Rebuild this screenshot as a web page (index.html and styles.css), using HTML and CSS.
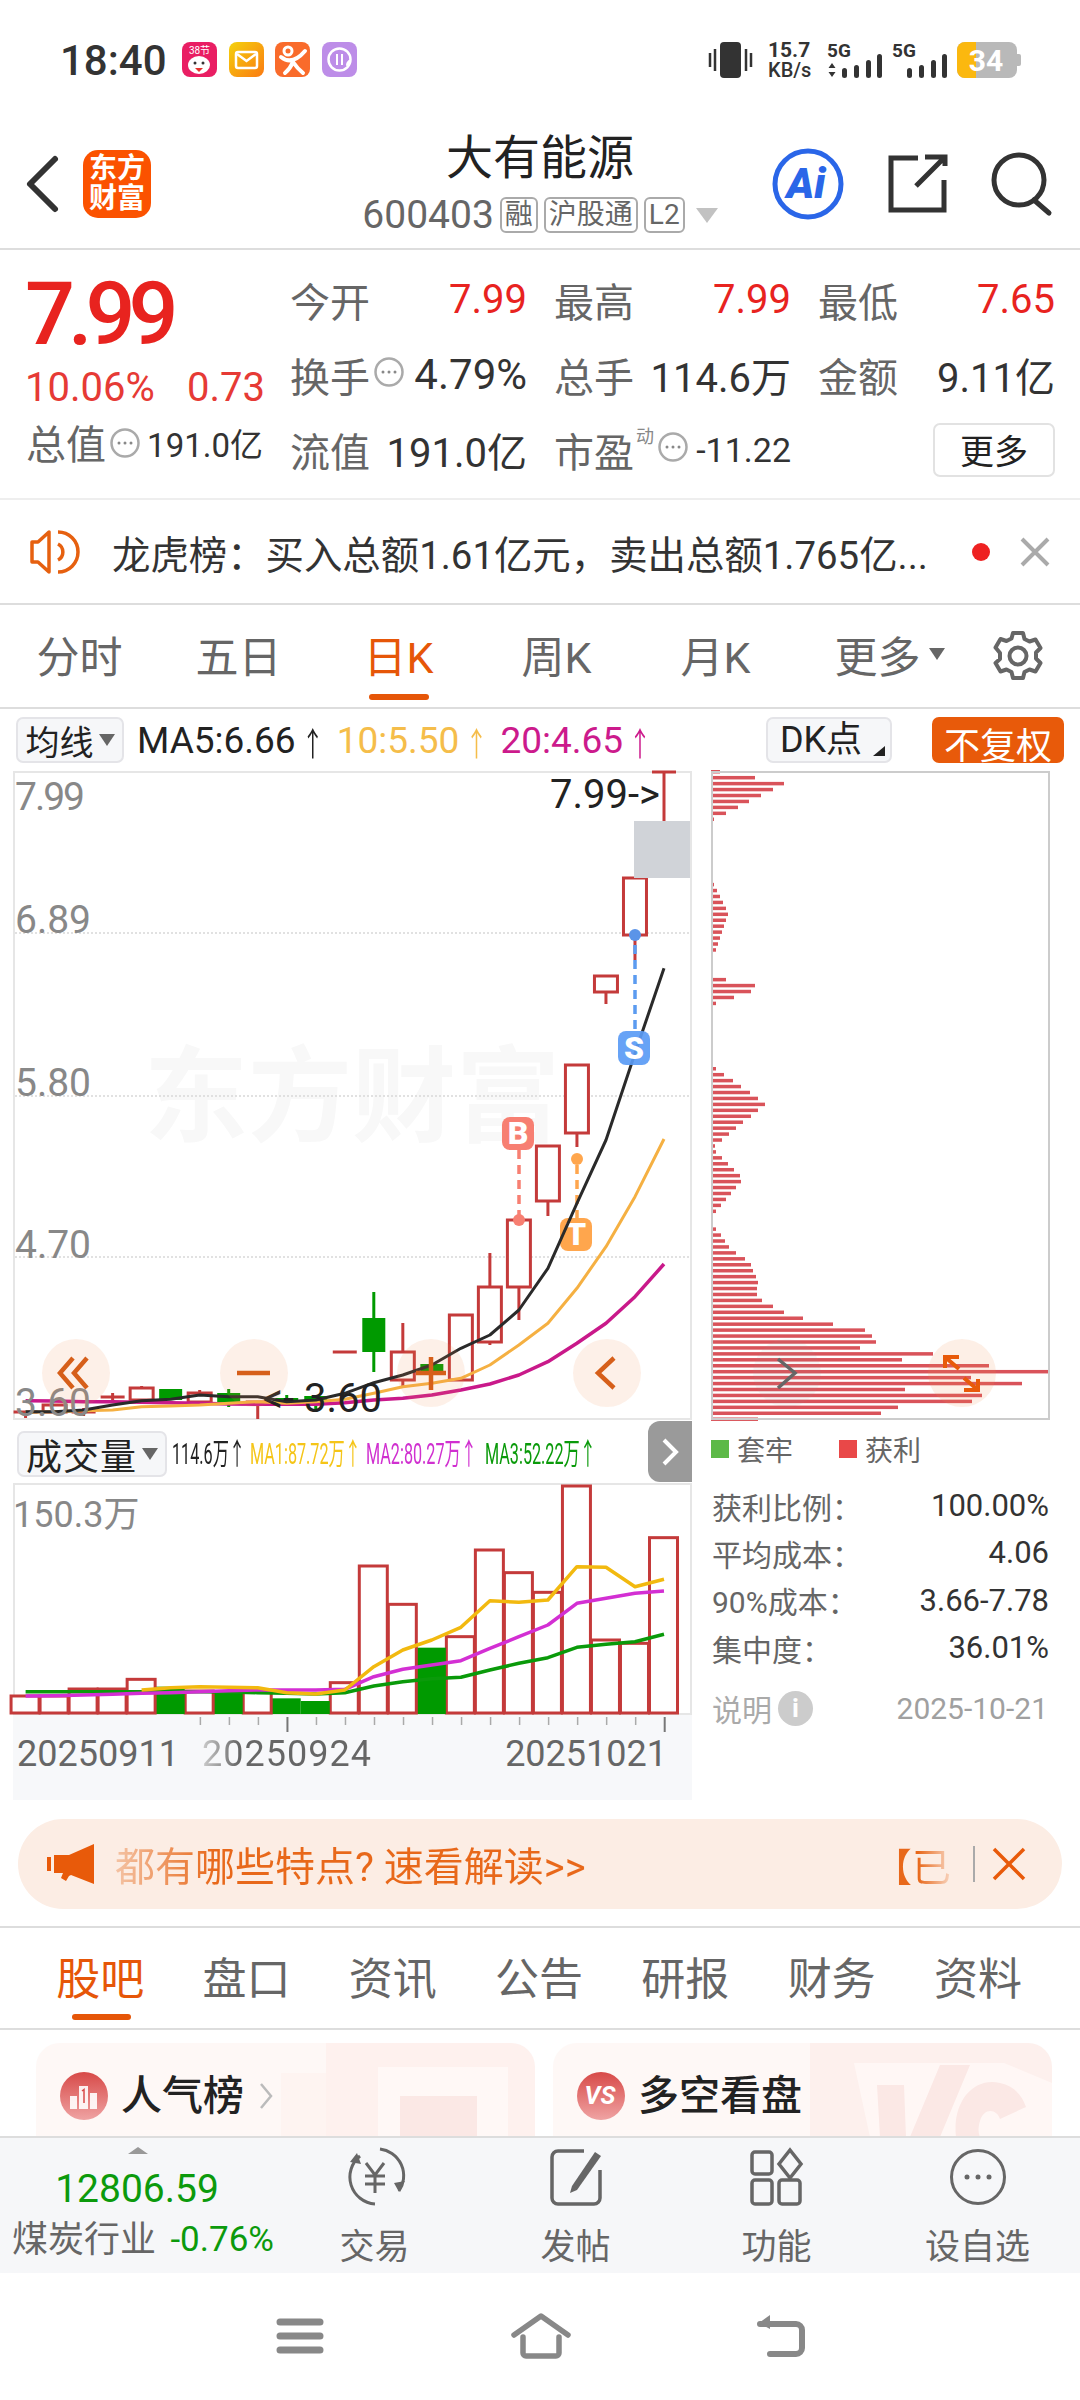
FILE: index.html
```html
<!DOCTYPE html>
<html lang="zh-CN">
<head>
    <meta charset="UTF-8">
    <meta name="viewport" content="width=device-width, initial-scale=1.0">
    <title>大有能源</title>
    <link rel="stylesheet" href="styles.css">
</head>
<body>
    <svg class="defs" width="0" height="0">
        <symbol id="dots" viewBox="0 0 30 30">
            <circle cx="15" cy="15" r="13.5" fill="none" stroke="#aaa" stroke-width="2.5"/>
            <circle cx="9" cy="15" r="1.5" fill="#888"/><circle cx="15" cy="15" r="1.5" fill="#888"/><circle cx="21" cy="15" r="1.5" fill="#888"/>
        </symbol>
    </svg>

    <div class="status">
        <span class="time">18:40</span>
        <svg class="apps" width="175" height="36" viewBox="182 42 175 36">
            <defs>
                <linearGradient id="gMail" x1="0" y1="0" x2="1" y2="1"><stop offset="0" stop-color="#f4d20c"/><stop offset="1" stop-color="#fb7a12"/></linearGradient>
            </defs>
            <rect x="182" y="42" width="35" height="35" rx="8" fill="#e91e63"/>
            <text x="199.500" y="54" class="app-txt">38节</text>
            <ellipse cx="199" cy="65" rx="11" ry="9" fill="#fff"/>
            <circle cx="195" cy="63" r="1.500" fill="#333"/><circle cx="203" cy="63" r="1.500" fill="#333"/>
            <path d="M195 68h8l-4 4z" fill="#e5322d"/>
            <rect x="229" y="42" width="35" height="35" rx="8" fill="url(#gMail)"/>
            <rect x="236" y="52" width="21" height="16" rx="2" fill="none" stroke="#fff" stroke-width="2.500"/>
            <path d="M237 54l9.500 7 9.500-7" fill="none" stroke="#fff" stroke-width="2.500"/>
            <rect x="275" y="42" width="35" height="35" rx="8" fill="#f96b2b"/>
            <circle cx="288" cy="51" r="4" fill="none" stroke="#fff" stroke-width="3"/>
            <path d="M281 57q11 9 24-6M293 62q-3 7-8 11M293 62q4 6 10 11" fill="none" stroke="#fff" stroke-width="4" stroke-linecap="round"/>
            <rect x="322" y="42" width="35" height="35" rx="8" fill="#bd8de8"/>
            <circle cx="339.500" cy="59.500" r="11" fill="none" stroke="#fff" stroke-width="2.500"/>
            <path d="M337 54v11M342 54v11" stroke="#fff" stroke-width="2"/>
            <path d="M346 66c3-1 5-3 5-7-3 1-5 3-5 7z" fill="#fff"/>
        </svg>
        <svg class="sys" width="325" height="40" viewBox="700 40 325 40">
            <rect x="720" y="42" width="21" height="36" rx="4" fill="#333"/>
            <path d="M710 53v14M715 49v22M746 49v22M751 53v14" stroke="#333" stroke-width="2.500"/>
            <text x="768" y="57" class="sys-txt">15.7</text>
            <text x="768" y="77" class="sys-sm">KB/s</text>
            <text x="827" y="57" class="sys-5g">5G</text>
            <path d="M832 63l3.500 5h-7zM832 77l3.500-5h-7z" fill="#333"/>
            <g fill="#333">
                <rect x="842" y="68" width="5" height="10" rx="2.500"/><rect x="854" y="65" width="5" height="13" rx="2.500"/><rect x="866" y="60" width="5" height="18" rx="2.500"/><rect x="877" y="54" width="5" height="24" rx="2.500"/>
                <rect x="907" y="68" width="5" height="10" rx="2.500"/><rect x="919" y="65" width="5" height="13" rx="2.500"/><rect x="931" y="60" width="5" height="18" rx="2.500"/><rect x="942" y="54" width="5" height="24" rx="2.500"/>
            </g>
            <text x="892" y="57" class="sys-5g">5G</text>
            <rect x="957" y="42" width="60" height="36" rx="8" fill="#b9b9b9"/>
            <path d="M965 42h11v36h-11a8 8 0 0 1-8-8v-20a8 8 0 0 1 8-8z" fill="#fbb80f"/>
            <path d="M1017 54h2a2 2 0 0 1 2 2v8a2 2 0 0 1-2 2h-2z" fill="#b9b9b9"/>
            <text x="986" y="71" class="bat-txt">34</text>
        </svg>
    </div>

    <header class="nav">
        <div class="nav-left">
            <svg width="34" height="56" viewBox="0 0 34 56"><path d="M30 3L5 28l25 25" fill="none" stroke="#333" stroke-width="6" stroke-linecap="round" stroke-linejoin="round"/></svg>
            <div class="logo"><span>东方</span><span>财富</span></div>
        </div>
        <div class="nav-mid">
            <div class="stock-name">大有能源</div>
            <div class="stock-sub">
                <span class="code">600403</span>
                <span class="tag">融</span><span class="tag">沪股通</span><span class="tag">L2</span>
                <i class="tri"></i>
            </div>
        </div>
        <div class="nav-right">
            <svg width="72" height="72" viewBox="0 0 72 72">
                <circle cx="36" cy="36" r="33" fill="none" stroke="#2a66e8" stroke-width="5"/>
                <text x="34" y="50" class="ai-txt">Ai</text>
            </svg>
            <svg width="60" height="60" viewBox="886 152 60 60"><path d="M917 156h-27v52h53v-30M915 184l27-27M924 155h20v9" fill="none" stroke="#333" stroke-width="5"/></svg>
            <svg width="62" height="62" viewBox="990 150 62 62"><circle cx="1019" cy="177" r="25" fill="none" stroke="#333" stroke-width="5"/><path d="M1034 197l15 13" stroke="#333" stroke-width="5" stroke-linecap="round"/></svg>
        </div>
    </header>

    <section class="quote">
        <div class="quote-left">
            <div class="price">7.99</div>
            <div class="change"><span>10.06%</span><span>0.73</span></div>
            <div class="total">
                <span class="lab">总值<svg class="dot"><use href="#dots"/></svg></span>
                <span class="val-sm">191.0亿</span>
            </div>
        </div>
        <div class="quote-grid">
            <div class="cell"><span class="lab">今开</span><span class="up">7.99</span></div>
            <div class="cell"><span class="lab">最高</span><span class="up">7.99</span></div>
            <div class="cell"><span class="lab">最低</span><span class="up">7.65</span></div>
            <div class="cell"><span class="lab">换手<svg class="dot"><use href="#dots"/></svg></span><span class="val val-wide">4.79%</span></div>
            <div class="cell"><span class="lab">总手</span><span class="val">114.6万</span></div>
            <div class="cell"><span class="lab">金额</span><span class="val">9.11亿</span></div>
            <div class="cell"><span class="lab">流值</span><span class="val">191.0亿</span></div>
            <div class="cell"><span class="lab">市盈<sup class="dyn">动</sup><svg class="dot"><use href="#dots"/></svg></span><span class="val-md">-11.22</span></div>
            <div class="cell cell-end"><button class="more-btn">更多</button></div>
        </div>
    </section>

    <section class="notice">
        <svg width="52" height="44" viewBox="0 0 52 44">
            <path d="M19 2v40L8 32H2V12h6z" fill="none" stroke="#e6600f" stroke-width="3.500" stroke-linejoin="round"/>
            <path d="M28 14a9 9 0 0 1 0 16M28 2a20 20 0 0 1 0 40" fill="none" stroke="#e6600f" stroke-width="3.500"/>
        </svg>
        <span class="notice-txt">龙虎榜：买入总额1.61亿元，卖出总额1.765亿...</span>
        <i class="red-dot"></i>
        <svg class="notice-x" width="30" height="30" viewBox="0 0 30 30"><path d="M2 2l26 26M28 2L2 28" stroke="#aaa" stroke-width="4"/></svg>
    </section>

    <nav class="period-tabs">
        <span>分时</span><span>五日</span><span class="on">日K</span><span>周K</span><span>月K</span>
        <span class="more-tab">更多<i class="tri-sm"></i></span>
        <svg width="52" height="52" viewBox="0 0 52 52">
            <circle cx="26" cy="26" r="8.500" fill="none" stroke="#666" stroke-width="4"/>
            <path d="M21 3h10l1.500 6 5 2.500 6-2 5 8.500-4.500 4.500v6l4.500 4.500-5 8.500-6-2-5 2.500-1.500 6H21l-1.500-6-5-2.500-6 2-5-8.500L8 29v-6L3.500 17.500l5-8.500 6 2 5-2.500z" fill="none" stroke="#666" stroke-width="4" stroke-linejoin="round"/>
        </svg>
    </nav>

    <div class="chart-tool">
        <button class="sel-btn">均线<i class="tri-sm tri-dark"></i></button>
        <div class="ma-line">
            <span class="c-k">MA5:6.66<b class="arr">↑</b></span><span class="c-y">10:5.50<b class="arr">↑</b></span><span class="c-m">20:4.65<b class="arr">↑</b></span>
        </div>
        <button class="dk-btn">DK点<i class="corner"></i></button>
        <button class="fq-btn">不复权</button>
    </div>

    <div class="chart-main">
        <div class="chart-col">
            <div class="frame kline-frame">
                <svg id="kline" width="675" height="645" viewBox="15 773 675 645">
                    <text x="144" y="1134" class="wm">东方财富</text>
                    <g class="grid-lines">
                        <path d="M15 933H690M15 1096H690M15 1257H690"/>
                    </g>
                    <g id="candles"></g>
                    <rect x="634" y="821" width="56" height="57" fill="#d0d3d8"/>
                    <path d="M635 945v85" class="dash" stroke="#5b9bf0"/>
                    <circle cx="635" cy="935" r="6" fill="#5b94e8"/>
                    <path d="M519 1150v65" class="dash" stroke="#f77f72"/>
                    <circle cx="519" cy="1220" r="6" fill="#f77f72"/>
                    <path d="M577 1165v53" class="dash" stroke="#ffa64d"/>
                    <circle cx="577" cy="1159" r="6" fill="#ffa64d"/>
                    <rect x="502" y="1117" width="32" height="33" rx="8" fill="#f77f72"/>
                    <text x="518" y="1144" class="badge">B</text>
                    <rect x="560" y="1218" width="32" height="33" rx="8" fill="#ffa64d"/>
                    <text x="576" y="1245" class="badge">T</text>
                    <g id="ma-lines"></g>
                    <rect x="618" y="1031" width="32" height="34" rx="8" fill="#5a9bf5" opacity=".92"/>
                    <text x="634" y="1059" class="badge">S</text>
                    <text x="15" y="810" class="axis tight">7.99</text>
                    <text x="15" y="933" class="axis">6.89</text>
                    <text x="15" y="1096" class="axis">5.80</text>
                    <text x="15" y="1258" class="axis">4.70</text>
                    <text x="15" y="1416" class="axis">3.60</text>
                    <text x="660" y="808" class="mark mark-end">7.99-&gt;</text>
                    <text x="382" y="1412" class="mark mark-end">&lt;- 3.60</text>
                    <g class="pad">
                        <circle cx="76" cy="1373" r="34"/><circle cx="254" cy="1373" r="34"/><circle cx="431" cy="1373" r="34"/><circle cx="607" cy="1373" r="34"/>
                    </g>
                    <path class="pad-ic" d="M73 1358l-13 15 13 15M87 1358l-13 15 13 15M237 1373h33M416 1373h30M431 1357v33M614 1358l-16 15 16 15"/>
                </svg>
            </div>
            <div class="vol-tool">
                <button class="sel-btn vol-btn">成交量<i class="tri-sm tri-dark"></i></button>
                <div class="vol-legend">
                    <span class="w-a"><b class="c-k">114.6万↑</b></span>
                    <span class="w-b"><b class="c-ma1">MA1:87.72万↑</b></span>
                    <span class="w-c"><b class="c-ma2">MA2:80.27万↑</b></span>
                    <span class="w-d"><b class="c-ma3">MA3:52.22万↑</b></span>
                </div>
                <div class="handle">
                    <svg width="18" height="30" viewBox="0 0 18 30"><path d="M3 3l12 12L3 27" fill="none" stroke="#fff" stroke-width="4"/></svg>
                </div>
            </div>
            <div class="frame vol-frame">
                <svg id="vol" width="675" height="228" viewBox="15 1485 675 228">
                    <g id="vol-bars"></g>
                    <g id="vol-lines"></g>
                    <text x="13" y="1527" class="axis axis-sm">150.3万</text>
                </svg>
            </div>
            <div class="date-strip">
                <svg id="ticks" width="679" height="22" viewBox="13 1715 679 22"></svg>
                <div class="dates"><span>20250911</span><span class="fade">20250924</span><span class="last">20251021</span></div>
            </div>
        </div>
        <aside class="chip-col">
            <div class="chip-frame">
                <svg id="chips" width="339" height="649" viewBox="711 771 339 649">
                    <g id="chip-bars"></g>
                    <circle cx="787" cy="1373" r="34" fill="#999" opacity=".08"/>
                    <circle cx="962" cy="1373" r="34" fill="#f08c50" opacity=".14"/>
                    <path d="M778 1359l17 14-17 15" fill="none" stroke="#666" stroke-width="3.500"/>
                    <path d="M945 1368v-11h14M945 1357l14 12M978 1379v11h-14M978 1390l-14-12" fill="none" stroke="#e85a0a" stroke-width="4"/>
                </svg>
            </div>
            <div class="legend">
                <i class="sq sq-g"></i><span>套牢</span>
                <i class="sq sq-r"></i><span>获利</span>
            </div>
            <dl class="stats">
                <div><dt>获利比例：</dt><dd>100.00%</dd></div>
                <div><dt>平均成本：</dt><dd>4.06</dd></div>
                <div><dt>90%成本：</dt><dd>3.66-7.78</dd></div>
                <div><dt>集中度：</dt><dd>36.01%</dd></div>
            </dl>
            <div class="chip-foot">
                <span>说明</span><i class="info">i</i><span class="foot-date">2025-10-21</span>
            </div>
        </aside>
    </div>

    <div class="banner">
        <svg width="48" height="40" viewBox="0 0 48 40">
            <path d="M0 13h4v14H0zM7 11l15 0L47 0v40L24 31l-2 1-3 5-5-3 2-5H7z" fill="#e85a0a"/>
        </svg>
        <span class="banner-txt">都有哪些特点? 速看解读&gt;&gt;</span>
        <span class="banner-tail">【已</span>
        <i class="banner-sep"></i>
        <svg width="34" height="34" viewBox="0 0 34 34"><path d="M2 2l30 30M32 2L2 32" stroke="#e85a0a" stroke-width="3.500"/></svg>
    </div>

    <nav class="f10-tabs">
        <span class="on">股吧</span><span>盘口</span><span>资讯</span><span>公告</span><span>研报</span><span>财务</span><span>资料</span>
    </nav>

    <div class="cards">
        <div class="card card-a">
            <svg width="48" height="48" viewBox="0 0 48 48">
                <circle cx="24" cy="24" r="24" fill="url(#gCard)"/>
                <path d="M10 24h7v13h-7zM19 14h9v23h-9zM30 21h7v16h-7z" fill="#fff" opacity=".9"/>
                <path d="M22 19l2-1.500V31" fill="none" stroke="#d74a48" stroke-width="1.500"/>
            </svg>
            <span class="card-title">人气榜</span>
            <svg width="14" height="30" viewBox="0 0 14 30"><path d="M2 3l10 12L2 27" fill="none" stroke="#bbb" stroke-width="2.500"/></svg>
        </div>
        <div class="card card-b">
            <svg class="vs-bg" width="242" height="94" viewBox="0 0 242 94">
                <path d="M44 20h150l48 20v54H60z" fill="#fff7f5"/>
                <path d="M67 42h27l2 52H70zM100 94l30-72h30l-30 72zM146 94c-4-36 18-60 44-54 14 3 22 12 26 24l-26 12c-3-10-16-12-20 2-2 6-2 12 0 16z" fill="#fbe8e5"/>
            </svg>
            <svg width="48" height="48" viewBox="0 0 48 48">
                <defs><linearGradient id="gCard" x1="0" y1="0" x2="0" y2="1"><stop offset="0" stop-color="#d74a48"/><stop offset="1" stop-color="#efa3a3"/></linearGradient></defs>
                <circle cx="24" cy="24" r="24" fill="url(#gCard)"/>
                <text x="23" y="32" class="vs-txt">VS</text>
            </svg>
            <span class="card-title">多空看盘</span>
        </div>
    </div>

    <footer class="bottom">
        <div class="index-box">
            <i class="tri-up"></i>
            <div class="index-val">12806.59</div>
            <div class="index-row"><span class="index-name">煤炭行业</span><span class="index-pct">-0.76%</span></div>
        </div>
        <div class="act">
            <svg width="66" height="58" viewBox="0 0 66 58">
                <path d="M18 8A27 27 0 0 0 33 56M38 1a27 27 0 0 1 19 42" fill="none" stroke="#666" stroke-width="3"/>
                <path d="M8 14l7-9 4 11zM63 33l-6 11-5-9z" fill="#666"/>
                <path d="M24 15l9 12 9-12M33 27v18M23 28h20M23 36h20" fill="none" stroke="#666" stroke-width="3"/>
            </svg>
            <span>交易</span>
        </div>
        <div class="act">
            <svg width="56" height="58" viewBox="0 0 56 58">
                <path d="M36 3H10a6 6 0 0 0-6 6v41a6 6 0 0 0 6 6h36a6 6 0 0 0 6-6V22" fill="none" stroke="#666" stroke-width="3.500"/>
                <path d="M24 38L47 4l6 4-24 34-7 3z" fill="#666"/>
            </svg>
            <span>发帖</span>
        </div>
        <div class="act">
            <svg width="54" height="58" viewBox="0 0 54 58">
                <g fill="none" stroke="#666" stroke-width="3.500"><rect x="2" y="4" width="20" height="22" rx="3"/><rect x="2" y="32" width="20" height="24" rx="3"/><rect x="29" y="32" width="21" height="24" rx="3"/><path d="M40 2l11 14-11 14-11-14z"/></g>
            </svg>
            <span>功能</span>
        </div>
        <div class="act">
            <svg width="58" height="58" viewBox="0 0 58 58">
                <circle cx="29" cy="29" r="26.500" fill="none" stroke="#666" stroke-width="3"/>
                <circle cx="18" cy="29" r="2.500" fill="#666"/><circle cx="29" cy="29" r="2.500" fill="#666"/><circle cx="40" cy="29" r="2.500" fill="#666"/>
            </svg>
            <span>设自选</span>
        </div>
    </footer>

    <div class="sysnav">
        <svg width="46" height="36" viewBox="0 0 46 36"><path d="M3 4h40M3 18h40M3 32h40" stroke="#888" stroke-width="7" stroke-linecap="round"/></svg>
        <svg width="60" height="46" viewBox="0 0 60 46"><path d="M3 22L30 3l27 19M12 24v16a3 3 0 0 0 3 3h30a3 3 0 0 0 3-3V24" fill="none" stroke="#888" stroke-width="5.500" stroke-linecap="round" stroke-linejoin="round"/></svg>
        <svg class="nav-back" width="50" height="44" viewBox="0 0 50 44"><path d="M4 10h36a6 6 0 0 1 6 6v18a6 6 0 0 1-6 6H14" fill="none" stroke="#888" stroke-width="6" stroke-linecap="round"/><path d="M14 1L3 9l11 6z" fill="#888"/></svg>
    </div>

    <script src="chart.js"></script>
</body>
</html>
```

FILE: styles.css
```css
* {
    box-sizing: border-box;
}
html, body {
    margin: 0;
    padding: 0;
}
body {
    width: 1080px;
    height: 2400px;
    overflow: hidden;
    background-color: #fff;
    color: #333;
    font-family: Roboto, "Noto Sans CJK SC", sans-serif;
}
i {
    font-style: normal;
}
button {
    font-family: inherit;
    padding: 0;
}
svg {
    display: block;
    flex: none;
    overflow: visible;
}
.defs {
    position: absolute;
}

/* status bar */
.status {
    height: 120px;
    display: flex;
    align-items: center;
    padding: 0 55px 0 60px;
}
.time {
    font-size: 42px;
    font-weight: 500;
    color: #333;
    width: 122px;
}
.sys {
    margin-left: auto;
}
.app-txt {
    font-size: 10px;
    fill: #fff;
    text-anchor: middle;
}
.sys-txt {
    font-size: 21px;
    font-weight: 700;
    fill: #333;
}
.sys-sm {
    font-size: 20px;
    font-weight: 500;
    fill: #333;
}
.sys-5g {
    font-size: 19px;
    font-weight: 700;
    fill: #333;
}
.bat-txt {
    font-size: 30px;
    font-weight: 700;
    fill: #fff;
    text-anchor: middle;
}

/* title row */
.nav {
    height: 130px;
    display: grid;
    grid-template-columns: 330px 420px 330px;
    border-bottom: 2px solid #ddd;
}
.nav-left {
    display: flex;
    align-items: center;
    gap: 24px;
    padding: 0 0 0 25px;
}
.logo {
    width: 68px;
    height: 68px;
    border-radius: 15px;
    background-color: #fb5200;
    color: #fff;
    font-size: 28px;
    font-weight: 700;
    line-height: 30px;
    display: flex;
    flex-direction: column;
    align-items: center;
    justify-content: center;
}
.nav-mid {
    display: flex;
    flex-direction: column;
    align-items: center;
    padding-top: 11px;
}
.stock-name {
    font-size: 47px;
    line-height: 54px;
    color: #222;
}
.stock-sub {
    display: flex;
    align-items: center;
    height: 42px;
    margin-top: 9px;
    color: #666;
}
.code {
    font-size: 39px;
    margin-right: 6px;
}
.tag {
    height: 36px;
    line-height: 32px;
    border: 2px solid #aaa;
    border-radius: 6px;
    font-size: 28px;
    padding: 0 3px;
    margin-right: 6px;
}
.tri {
    width: 0;
    height: 0;
    margin-left: 5px;
    border-left: 11px solid transparent;
    border-right: 11px solid transparent;
    border-top: 15px solid #c2c2c2;
}
.nav-right {
    display: flex;
    align-items: center;
    padding-left: 22px;
    gap: 43px;
}
.ai-txt {
    font-size: 42px;
    font-weight: 900;
    font-style: italic;
    fill: #2a66e8;
    text-anchor: middle;
}

/* quote block */
.quote {
    height: 250px;
    display: flex;
    border-bottom: 2px solid #eee;
    padding-left: 25px;
}
.quote-left {
    width: 265px;
}
.price {
    margin-top: 20px;
    font-size: 88px;
    line-height: 88px;
    font-weight: 500;
    letter-spacing: -7px;
    color: #e8231f;
}
.change {
    margin-top: 7px;
    display: flex;
    justify-content: space-between;
    width: 240px;
    font-size: 40px;
    line-height: 46px;
    color: #e63a35;
}
.total {
    margin-top: 12px;
    display: flex;
    justify-content: space-between;
    width: 238px;
    padding-left: 1px;
    line-height: 46px;
}
.lab {
    display: flex;
    align-items: center;
    font-size: 40px;
    color: #666;
}
.dot {
    width: 30px;
    height: 30px;
    margin: -6px 0 0 4px;
}
.val-sm {
    font-size: 33px;
    color: #333;
}
.quote-grid {
    display: grid;
    grid-template-columns: repeat(3, 237px);
    grid-auto-rows: 75px;
    column-gap: 27px;
    padding-top: 12px;
}
.cell {
    display: flex;
    justify-content: space-between;
    align-items: center;
    font-size: 40px;
    white-space: nowrap;
}
.cell-end {
    justify-content: flex-end;
}
.up {
    color: #e8231f;
}
.val {
    color: #333;
}
.val-wide {
    font-size: 42px;
}
.val-md {
    font-size: 34px;
    color: #333;
}
.dyn {
    font-size: 18px;
    line-height: 18px;
    margin: -26px 0 0 2px;
    color: #888;
}
.more-btn {
    width: 122px;
    height: 54px;
    background-color: #fff;
    border: 2px solid #e2e2e2;
    border-radius: 7px;
    font-size: 34px;
    color: #222;
}

/* notice */
.notice {
    height: 105px;
    display: flex;
    align-items: center;
    padding-left: 30px;
    border-bottom: 2px solid #ddd;
}
.notice-txt {
    margin-left: 30px;
    width: 860px;
    font-size: 38.400px;
    color: #333;
    white-space: nowrap;
}
.red-dot {
    width: 18px;
    height: 18px;
    border-radius: 50%;
    background-color: #ee2222;
}
.notice-x {
    margin-left: 30px;
}

/* period tabs */
.period-tabs {
    height: 104px;
    display: grid;
    grid-template-columns: repeat(6, 159px) 126px;
    align-items: center;
    border-bottom: 2px solid #ddd;
    font-size: 43px;
    color: #666;
}
.period-tabs span {
    position: relative;
    text-align: center;
    margin-top: -4px;
}
.period-tabs .on {
    color: #e65608;
    padding-left: 2px;
}
.period-tabs .on::after {
    content: "";
    position: absolute;
    left: 50%;
    margin-left: -29px;
    bottom: -15px;
    width: 60px;
    height: 6px;
    border-radius: 3px;
    background-color: #e65608;
}
.period-tabs svg {
    margin-left: 38px;
}
.more-tab {
    display: flex;
    align-items: center;
    justify-content: center;
    padding-left: 30px;
}
.tri-sm {
    display: inline-block;
    width: 0;
    height: 0;
    margin-left: 8px;
    border-left: 8px solid transparent;
    border-right: 8px solid transparent;
    border-top: 12px solid #666;
}
.tri-dark {
    margin-left: 5px;
}

/* chart toolbar */
.chart-tool {
    height: 62px;
    display: flex;
    align-items: center;
    padding: 0 16px;
}
.sel-btn {
    width: 108px;
    height: 46px;
    display: flex;
    align-items: center;
    justify-content: center;
    background-color: #f6f7f9;
    border: 2px solid #e4e4e8;
    border-radius: 7px;
    font-size: 34px;
    color: #222;
}
.ma-line {
    display: flex;
    gap: 13px;
    margin-left: 13px;
    font-size: 37px;
    white-space: nowrap;
}
.arr {
    display: inline-block;
    width: 22px;
    margin-left: 6px;
    font-size: 22px;
    font-weight: 400;
    text-align: center;
    vertical-align: 2px;
    transform: scaleY(1.5);
}
.c-k {
    color: #222;
}
.c-y {
    color: #f5bd4a;
}
.c-m {
    color: #cc1a8c;
}
.dk-btn {
    position: relative;
    margin-left: auto;
    width: 126px;
    height: 46px;
    background-color: #f6f7f9;
    border: 2px solid #e4e4e8;
    border-radius: 7px;
    font-size: 36px;
    color: #222;
    padding-right: 16px;
    text-align: center;
    line-height: 40px;
}
.corner {
    position: absolute;
    right: 5px;
    bottom: 5px;
    width: 0;
    height: 0;
    border-left: 12px solid transparent;
    border-bottom: 10px solid #222;
}
.fq-btn {
    width: 132px;
    height: 46px;
    margin-left: 40px;
    border: none;
    border-radius: 7px;
    background-color: #e85a0a;
    color: #fff;
    font-size: 36px;
}

/* chart area */
.chart-main {
    display: flex;
    padding-left: 13px;
    height: 1048px;
}
.chart-col {
    width: 679px;
}
.frame {
    border: 2px solid #e6e6e6;
}
.kline-frame {
    height: 649px;
}
.vol-frame {
    height: 232px;
}
.wm {
    font-size: 104px;
    font-weight: 700;
    fill: #f8f8f8;
}
.grid-lines path {
    fill: none;
    stroke: #d8d8d8;
    stroke-width: 1.500;
    stroke-dasharray: 2 2;
}
.dash {
    fill: none;
    stroke-width: 3.500;
    stroke-dasharray: 9 6;
}
.badge {
    font-size: 32px;
    font-weight: 900;
    fill: #fff;
    text-anchor: middle;
}
.axis {
    font-size: 39px;
    fill: #888;
}
.tight {
    letter-spacing: -2px;
}
.axis-sm {
    font-size: 36px;
}
.mark {
    font-size: 40px;
    fill: #222;
}
.mark-end {
    text-anchor: end;
}
.pad circle {
    fill: #f08c50;
    opacity: .13;
}
.pad-ic {
    fill: none;
    stroke: #d65f1a;
    stroke-width: 4.500;
}

/* volume pane */
.vol-tool {
    position: relative;
    height: 63px;
    display: flex;
    align-items: center;
    padding-left: 4px;
}
.vol-btn {
    width: 150px;
    margin-top: 4px;
    font-size: 36px;
    letter-spacing: 1px;
}
.vol-legend {
    display: flex;
    margin: 4px 0 0 5px;
    font-size: 30px;
    white-space: nowrap;
}
.vol-legend span {
    display: block;
    height: 36px;
    line-height: 36px;
}
.vol-legend b {
    display: inline-block;
    font-weight: 400;
    transform: scaleX(.54);
    transform-origin: left center;
}
.w-a {
    width: 78px;
}
.w-b {
    width: 116px;
}
.w-c {
    width: 119px;
}
.w-d {
    width: 100px;
}
.c-ma1 {
    color: #f5c518;
}
.c-ma2 {
    color: #d030d0;
}
.c-ma3 {
    color: #0a9a0a;
}
.handle {
    position: absolute;
    right: 0;
    top: 1px;
    width: 44px;
    height: 61px;
    border-radius: 12px 0 0 12px;
    background-color: #9a9a9a;
    display: flex;
    align-items: center;
    justify-content: center;
}
.date-strip {
    height: 85px;
    background-color: #f7f8fa;
}
.dates {
    position: relative;
    height: 34px;
    font-size: 36px;
    line-height: 34px;
    color: #666;
}
.dates span {
    position: absolute;
    top: 0;
}
.dates span:nth-child(1) {
    left: 4px;
}
.dates .fade {
    left: 189px;
    letter-spacing: 1px;
    background: linear-gradient(90deg, #ccc, #666 22%);
    -webkit-background-clip: text;
    background-clip: text;
    color: transparent;
}
.dates .last {
    right: 25px;
}

/* chip panel */
.chip-col {
    width: 339px;
    margin-left: 19px;
}
.chip-frame {
    height: 649px;
    outline: 2px solid #ccc;
    outline-offset: -2px;
}
.legend {
    height: 58px;
    display: flex;
    align-items: center;
    font-size: 28px;
    color: #666;
}
.sq {
    width: 18px;
    height: 18px;
    margin-right: 8px;
}
.sq-g {
    background-color: #5cb947;
}
.sq-r {
    margin-left: 46px;
    background-color: #e94848;
}
.stats {
    margin: 4px 0 0;
}
.stats div {
    height: 47.300px;
    display: flex;
    justify-content: space-between;
    align-items: center;
    padding: 0 1px;
    font-size: 30px;
}
.stats dt {
    color: #666;
}
.stats dd {
    margin: 0;
    font-size: 31px;
    color: #333;
}
.chip-foot {
    margin-top: 15px;
    display: flex;
    align-items: center;
    font-size: 30px;
    color: #aaa;
    padding: 0 2px 0 1px;
}
.info {
    width: 35px;
    height: 35px;
    margin-left: 6px;
    border-radius: 50%;
    background-color: #ccc;
    color: #fff;
    font-size: 26px;
    font-weight: 700;
    line-height: 35px;
    text-align: center;
}
.foot-date {
    margin-left: auto;
    color: #a0a0a0;
}

/* orange banner */
.banner {
    height: 90px;
    margin: 0 18px 17px;
    padding-left: 29px;
    display: flex;
    align-items: center;
    border-radius: 45px;
    background-color: #fcede4;
}
.banner-txt {
    margin-left: 20px;
    width: 758px;
    font-size: 40px;
    white-space: nowrap;
    background: linear-gradient(90deg, #f4c3a4, #e8681a 100px);
    -webkit-background-clip: text;
    background-clip: text;
    color: transparent;
}
.banner-tail {
    width: 100px;
    white-space: nowrap;
    font-size: 39px;
    background: linear-gradient(90deg, #e8681a 45%, #fcede4 85%);
    -webkit-background-clip: text;
    background-clip: text;
    color: transparent;
}
.banner-sep {
    width: 2px;
    height: 36px;
    margin-right: 17px;
    background-color: #aaa;
}

/* f10 tabs */
.f10-tabs {
    height: 104px;
    display: grid;
    grid-template-columns: repeat(7, 146.300px);
    align-items: center;
    padding-left: 27px;
    border-top: 2px solid #ddd;
    border-bottom: 2px solid #ddd;
    font-size: 44px;
    color: #666;
}
.f10-tabs span {
    position: relative;
    text-align: center;
    margin-top: -4px;
}
.f10-tabs .on {
    color: #e65608;
}
.f10-tabs .on::after {
    content: "";
    position: absolute;
    left: 50%;
    margin-left: -28px;
    bottom: -12px;
    width: 59px;
    height: 6px;
    border-radius: 3px;
    background-color: #e65608;
}

/* cards, cut off by the bottom bar */
.cards {
    height: 106px;
    overflow: hidden;
    display: flex;
    gap: 18px;
    padding: 13px 28px 0 36px;
}
.card {
    position: relative;
    width: 499px;
    height: 180px;
    display: flex;
    align-items: flex-start;
    padding: 29px 0 0 24px;
    border-radius: 24px;
}
.card > span, .card > svg:not(.vs-bg) {
    position: relative;
}
.card-a {
    background:
        linear-gradient(#fbe8e5, #fbe8e5) 364px 53px / 77px 60px no-repeat,
        linear-gradient(#fff8f6, #fff8f6) 342px 24px / 130px 100% no-repeat,
        linear-gradient(#fef1ee, #fef1ee) 290px 0 / 209px 100% no-repeat,
        linear-gradient(#fef4f1, #fef4f1) 245px 30px / 60px 100% no-repeat,
        #fef8f6;
}
.card-b {
    background:
        linear-gradient(#fdf0ed, #fdf0ed) 257px 0 / 242px 100% no-repeat,
        #fef8f6;
}
.vs-bg {
    position: absolute;
    right: 0;
    top: 0;
}
.card-title {
    margin-left: 13px;
    font-size: 41px;
    line-height: 48px;
    font-weight: 500;
    color: #222;
}
.card-a svg:last-child {
    margin: 9px 0 0 15px;
}
.vs-txt {
    font-size: 25px;
    font-weight: 700;
    font-style: italic;
    fill: #fff;
    text-anchor: middle;
}

/* bottom bar */
.bottom {
    height: 137px;
    display: grid;
    grid-template-columns: 274px repeat(4, 201px);
    border-top: 2px solid #ddd;
    background-color: #f6f7f9;
}
.index-box {
    position: relative;
    padding-top: 29px;
    text-align: center;
}
.tri-up {
    position: absolute;
    left: 128px;
    top: 9px;
    width: 0;
    height: 0;
    border-left: 10px solid transparent;
    border-right: 10px solid transparent;
    border-bottom: 7px solid #999;
}
.index-val {
    font-size: 39px;
    line-height: 44px;
    color: #0c9a0c;
}
.index-row {
    display: flex;
    justify-content: space-between;
    align-items: center;
    padding: 0 0 0 12px;
    margin-top: 7px;
    line-height: 44px;
}
.index-name {
    font-size: 36px;
    color: #666;
}
.index-pct {
    font-size: 35px;
    color: #0c9a0c;
}
.act {
    display: flex;
    flex-direction: column;
    align-items: center;
    padding-top: 10px;
    font-size: 35px;
    color: #666;
}
.act span {
    margin-top: 17px;
    line-height: 50px;
}

/* system nav */
.sysnav {
    height: 125px;
    display: flex;
    align-items: center;
    padding: 0 0 0 277px;
    gap: 188px;
}
.nav-back {
    margin-left: -3px;
}
```

FILE: chart.js
```js
const SVG_NS = 'http://www.w3.org/2000/svg';
const RED = '#c43a3a';
const GREEN = '#009a00';

function add(parent, tag, attrs) {
    const el = document.createElementNS(SVG_NS, tag);
    for (const key in attrs) {
        el.setAttribute(key, attrs[key]);
    }
    parent.appendChild(el);
    return el;
}

// k counts from the latest day, 29px apart
function dayX(k) {
    return 664 - 29.02 * k;
}

function polyline(parent, values, color, width, toY) {
    const points = values.map((v, k) => dayX(k).toFixed(1) + ',' + toY(v).toFixed(1));
    add(parent, 'polyline', {
        points: points.join(' '),
        fill: 'none',
        stroke: color,
        'stroke-width': width,
        'stroke-linejoin': 'round'
    });
}

// top, bottom, wick top, wick bottom, colour
const candles = [
    [772, 772, 772, 821, RED],
    [878, 935, 878, 960, RED],
    [976, 992, 976, 1004, RED],
    [1065, 1133, 1065, 1147, RED],
    [1146, 1201, 1146, 1216, RED],
    [1220, 1287, 1220, 1320, RED],
    [1287, 1342, 1253, 1345, RED],
    [1315, 1380, 1315, 1380, RED],
    [1364, 1373, 1364, 1373, GREEN],
    [1352, 1380, 1323, 1387, RED],
    [1318, 1352, 1292, 1372, GREEN],
    [1352, 1352, 1352, 1352, RED],
    [1396, 1402, 1396, 1412, GREEN],
    [1398, 1403, 1395, 1403, GREEN],
    [1402, 1402, 1402, 1419, RED],
    [1393, 1402, 1389, 1407, GREEN],
    [1393, 1402, 1390, 1402, RED],
    [1389, 1400, 1389, 1400, GREEN],
    [1388, 1400, 1386, 1400, RED],
    [1397, 1397, 1393, 1403, RED],
    [1412, 1412, 1408, 1416, RED],
    [1405, 1412, 1405, 1412, RED],
    [1412, 1412, 1412, 1418, RED]
];

const candleBox = document.getElementById('candles');
candles.forEach(function (c, k) {
    const x = dayX(k);
    add(candleBox, 'line', { x1: x, x2: x, y1: c[2], y2: c[3], stroke: c[4], 'stroke-width': 3 });
    if (c[0] === c[1]) {
        add(candleBox, 'line', { x1: x - 12, x2: x + 12, y1: c[0], y2: c[0], stroke: c[4], 'stroke-width': 3 });
    } else {
        add(candleBox, 'rect', {
            x: x - 11.5, y: c[0], width: 23, height: c[1] - c[0],
            fill: c[4] === GREEN ? GREEN : '#fff',
            stroke: c[4], 'stroke-width': c[4] === GREEN ? 0 : 3
        });
    }
});

// moving averages, read off the chart as y values
const klineY = function (v) { return 960 + v / 3; };
const maBox = document.getElementById('ma-lines');
polyline(maBox, [912, 1010, 1090, 1150, 1205, 1245, 1272, 1290, 1305, 1315, 1320, 1328, 1333, 1333, 1333, 1332, 1330, 1328, 1327, 1325, 1325, 1323, 1322], '#c9198a', 3.5, klineY);
polyline(maBox, [537, 710, 860, 985, 1090, 1155, 1215, 1255, 1270, 1280, 1300, 1318, 1325, 1330, 1325, 1330, 1335, 1338, 1340, 1350, 1352, 1355, 1357], '#f5b042', 3, klineY);
polyline(maBox, [25, 280, 540, 730, 925, 1050, 1125, 1165, 1215, 1245, 1268, 1300, 1320, 1325, 1310, 1310, 1305, 1318, 1322, 1335, 1350, 1355, 1355], '#2a2a2a', 3, klineY);

// volume bars, tops only: the base is fixed
const volTops = [383, 700, 690, 228, 547, 488, 420, 680, 713, 583, 468, 818, 873, 865, 845, 840, 843, 830, 808, 837, 837, 858, 858];
const volGreen = [8, 12, 13, 15, 17];
const volY = function (v) { return 1410 + v / 3; };
const barBox = document.getElementById('vol-bars');
volTops.forEach(function (top, k) {
    const y = volY(top);
    const x = 649.5 - 29.02 * k;
    if (volGreen.indexOf(k) >= 0) {
        add(barBox, 'rect', { x: x - 0.5, y: y, width: 29, height: 1714 - y, fill: GREEN });
    } else {
        add(barBox, 'rect', { x: x, y: y, width: 28, height: 1713 - y, fill: '#fff', stroke: RED, 'stroke-width': 3 });
    }
});

const volLines = document.getElementById('vol-lines');
polyline(volLines, [673, 695, 703, 712, 743, 760, 780, 802, 806, 815, 828, 848, 852, 850, 848, 846, 845, 845, 845, 845, 845, 845, 845], '#0a9a0a', 3.5, volY);
polyline(volLines, [543, 550, 565, 580, 645, 680, 715, 752, 765, 778, 800, 838, 840, 840, 840, 842, 845, 848, 850, 853, 855, 857, 858], '#d32fd3', 3.5, volY);
polyline(volLines, [508, 530, 472, 470, 570, 577, 572, 652, 690, 720, 770, 840, 852, 848, 833, 832, 830, 833, 840], '#f2b90f', 3.5, volY);

// ticks under the volume pane
const tickBox = document.getElementById('ticks');
for (let k = 0; k < 17; k++) {
    const x = 664.7 - 29.02 * k;
    const long = k === 0 || k === 13;
    add(tickBox, 'line', {
        x1: x, x2: x, y1: 1717, y2: long ? 1732 : 1725,
        stroke: long ? '#777' : '#aaa', 'stroke-width': long ? 2 : 1.5
    });
}

// chip distribution, one bar per row (0 = empty row)
const chips = [
    9, 44, 73, 62, 50, 38, 27, 15, 3, 0, 0, 0, 0, 0, 0, 0, 0, 0, 0,
    3, 6, 9, 12, 15, 17, 15, 13, 11, 9, 7, 5, 2, 0, 0, 0,
    15, 44, 40, 23, 5, 0, 0, 0, 0, 0, 0, 0, 0, 0, 0,
    5, 13, 22, 30, 39, 47, 54, 47, 40, 32, 25, 18, 11, 4, 5, 11, 17, 23, 29, 30, 25, 20, 15, 10, 5, 0,
    1, 5, 10, 14, 18, 25, 34, 40, 42, 45, 47, 46, 46, 51, 62, 73, 92, 122, 154, 161, 165, 149, 222, 191, 278, 339, 260, 311, 194, 271, 261, 187, 170, 47
];
const chipBox = document.getElementById('chip-bars');
chips.forEach(function (w, row) {
    if (w > 0) {
        add(chipBox, 'rect', { x: 711, y: 770 + row * 5.94, width: w, height: 3.5, fill: '#d9535a' });
    }
});
```
